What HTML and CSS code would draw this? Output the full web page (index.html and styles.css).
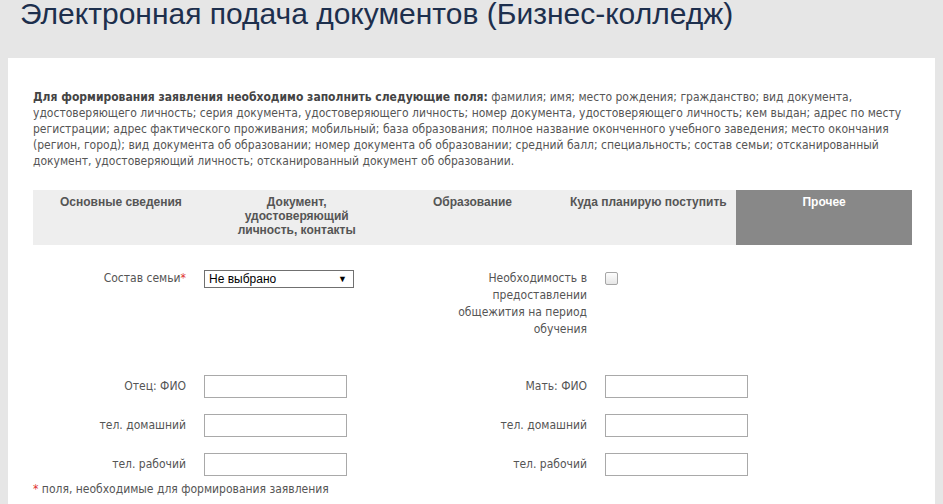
FILE: index.html
```html
<!DOCTYPE html>
<html lang="ru">
<head>
<meta charset="utf-8">
<title>Электронная подача документов</title>
<link rel="stylesheet" href="styles.css">
</head>
<body>
<div class="page">
  <h1 class="title">Электронная подача документов (Бизнес-колледж)</h1>
  <div class="panel">
    <p class="intro"><b>Для формирования заявления необходимо заполнить следующие поля:</b> фамилия; имя; место рождения; гражданство; вид документа, удостоверяющего личность; серия документа, удостоверяющего личность; номер документа, удостоверяющего личность; кем выдан; адрес по месту регистрации; адрес фактического проживания; мобильный; база образования; полное название оконченного учебного заведения; место окончания (регион, город); вид документа об образовании; номер документа об образовании; средний балл; специальность; состав семьи; отсканированный документ, удостоверяющий личность; отсканированный документ об образовании.</p>

    <div class="tabs">
      <div class="tab">Основные сведения</div>
      <div class="tab">Документ,<br>удостоверяющий<br>личность, контакты</div>
      <div class="tab">Образование</div>
      <div class="tab">Куда планирую поступить</div>
      <div class="tab active">Прочее</div>
    </div>

    <div class="form">
      <div class="row row-top">
        <div class="field">
          <label class="label">Состав семьи<span class="req">*</span></label>
          <div class="select"><span>Не выбрано</span><span class="arrow">▼</span></div>
        </div>
        <div class="field">
          <label class="label label-multi">Необходимость в предоставлении общежития на период обучения</label>
          <span class="checkbox"></span>
        </div>
      </div>
      <div class="row">
        <div class="field"><label class="label">Отец: ФИО</label><input class="input" type="text"></div>
        <div class="field"><label class="label">Мать: ФИО</label><input class="input" type="text"></div>
      </div>
      <div class="row">
        <div class="field"><label class="label">тел. домашний</label><input class="input" type="text"></div>
        <div class="field"><label class="label">тел. домашний</label><input class="input" type="text"></div>
      </div>
      <div class="row">
        <div class="field"><label class="label">тел. рабочий</label><input class="input" type="text"></div>
        <div class="field"><label class="label">тел. рабочий</label><input class="input" type="text"></div>
      </div>
    </div>

    <p class="note"><span class="req">*</span> поля, необходимые для формирования заявления</p>
  </div>
</div>
</body>
</html>
```

FILE: styles.css
```css
html, body {
  margin: 0;
  padding: 0;
  background: #e6e6e6;
}
.page {
  padding-left: 8px;
  width: 927px;
}
.title {
  margin: 0;
  padding: 0 0 0 12px;
  height: 58px;
  font-family: "Liberation Sans", Arial, sans-serif;
  font-weight: normal;
  font-size: 30px;
  line-height: 28px;
  color: #1d2f4d;
}
.panel {
  background: #fff;
  padding: 31px 23px 20px 25px;
  font-family: "DejaVu Sans Condensed", "DejaVu Sans", sans-serif;
  font-size: 12px;
  color: #555;
}
.intro {
  margin: 0;
  line-height: 16px;
}
.intro b {
  color: #444;
}
.tabs {
  margin-top: 21px;
  display: grid;
  grid-template-columns: repeat(5, 1fr);
  height: 55px;
  background: #eee;
}
.tab {
  font-family: "Liberation Sans", Arial, sans-serif;
  font-weight: bold;
  font-size: 12px;
  line-height: 14px;
  color: #555;
  text-align: center;
  padding-top: 5px;
}
.tab.active {
  background: #888;
  color: #fff;
}
.form {
  margin-top: 25px;
}
.row {
  display: grid;
  grid-template-columns: 401px 1fr;
  margin-bottom: 16px;
}
.row:last-child {
  margin-bottom: 0;
}
.row-top {
  margin-bottom: 37px;
}
.field {
  display: flex;
  align-items: center;
}
.row-top .field {
  align-items: flex-start;
}
.label {
  width: 153px;
  margin-right: 18px;
  text-align: right;
  line-height: 17px;
}
.req {
  color: #e0332f;
}
.select {
  box-sizing: border-box;
  width: 150px;
  height: 18px;
  border: 1px solid #707070;
  display: flex;
  align-items: center;
  justify-content: space-between;
  padding: 0 6px 0 4px;
  font-family: "Liberation Sans", Arial, sans-serif;
  font-size: 12px;
  color: #000;
}
.arrow {
  font-size: 9px;
}
.checkbox {
  box-sizing: border-box;
  width: 13px;
  height: 13px;
  margin-top: 2px;
  border: 1px solid #a6a6a6;
  border-radius: 2px;
  background: linear-gradient(#fdfdfd, #e6e6e6);
}
.input {
  box-sizing: border-box;
  width: 143px;
  height: 23px;
  border: 1px solid #a9a9a9;
  margin: 0;
  padding: 0;
  background: #fff;
}
.note {
  margin: 5px 0 0 0;
  line-height: 16px;
}
```
